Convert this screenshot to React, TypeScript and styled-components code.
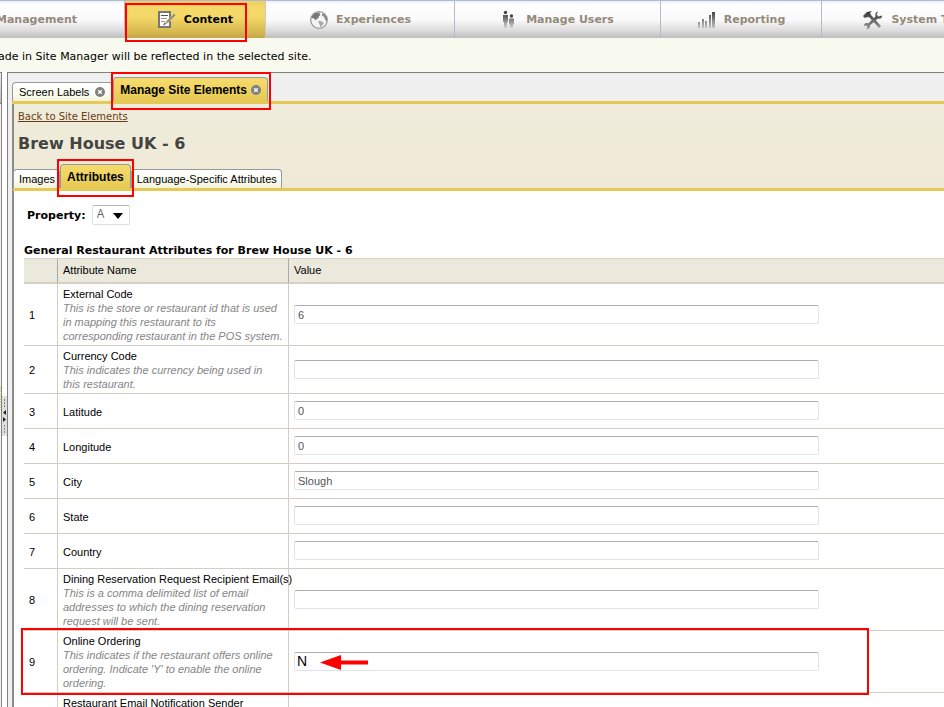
import React from "react";
import styled, { createGlobalStyle, css } from "styled-components";

const verdana = `"DejaVu Sans", Verdana, sans-serif`;
const arial = `"Liberation Sans", Arial, sans-serif`;

const GlobalStyle = createGlobalStyle`
  * { box-sizing: border-box; }
  html, body { margin: 0; padding: 0; }
  body { overflow: hidden; background: #fff; color: #000; font: 11px/14px ${arial}; }
  button, input, select { font: inherit; margin: 0; }
`;

const Page = styled.div`
  display: flex;
  flex-direction: column;
  height: 100vh;
  overflow: hidden;
`;

const Highlight = styled.span<{ $inset: string }>`
  position: absolute;
  inset: ${(p) => p.$inset};
  border: 2px solid #f00;
  pointer-events: none;
  z-index: 5;
`;

const Nav = styled.nav`
  display: flex;
  flex: none;
  height: 38px;
  border-top: 1px solid #a9bcd6;
  background: linear-gradient(#f0f0f4 0, #fff 4px, #fafafa 50%, #dcdcdc 80%, #bebebe 100%);
`;

const NavItem = styled.button<{ $width: number; $active?: boolean; $pull?: number }>`
  position: relative;
  display: flex;
  flex: none;
  align-items: center;
  justify-content: center;
  gap: 7px;
  width: ${(p) => p.$width}px;
  margin-left: ${(p) => p.$pull ?? 0}px;
  padding: 1px 0 0;
  border: 0;
  border-right: 1px solid #b9b7ce;
  background: none;
  color: #94897a;
  font: bold 11px/14px ${verdana};
  white-space: nowrap;
  ${(p) =>
    p.$active &&
    css`
      border-right-color: #c9c9cf;
      background: linear-gradient(#efcf62 0, #f5da69 8px, #f3d767 45%, #d9bb52 80%, #c4a548 100%);
      color: #000;
    `}
`;

const Notice = styled.div`
  display: flex;
  flex: none;
  align-items: center;
  height: 34px;
  padding-top: 4px;
  overflow: hidden;
  background: #f8f9ef;
  font: 11px/14px ${verdana};
  white-space: nowrap;
`;

const NoticeText = styled.p`
  margin: 0 0 0 -2px;
`;

const Workspace = styled.div`
  display: flex;
  flex: 1;
  min-height: 0;
`;

const SidePanel = styled.div`
  display: flex;
  flex: none;
  flex-direction: column;
  gap: 283px;
  width: 2px;
  border-top: 1px solid #808080;
  border-right: 1px solid #808080;
  background: #f4f4f4;
`;

const SideHeader = styled.div`
  height: 31px;
  border-bottom: 1px solid #808080;
  background: linear-gradient(#eee, #bbb);
`;

const SideTexture = styled.div`
  height: 24px;
  background: repeating-linear-gradient(#d8c868 0 1px, #fff 1px 2px);
`;

const Splitter = styled.div`
  display: flex;
  flex: none;
  align-items: center;
  width: 5px;
  padding-top: 53px;
`;

const Main = styled.main`
  display: flex;
  flex: 1;
  flex-direction: column;
  min-width: 0;
  padding-left: 4px;
  border-top: 1px solid #808080;
  border-left: 1px solid #808080;
  background: #f0f0f0;
`;

const TabStrip = styled.div`
  display: flex;
  flex: none;
  align-items: flex-end;
  height: 31px;
  border-bottom: 3px solid #e6c954;
`;

const Tab = styled.button<{ $active?: boolean; $compact?: boolean }>`
  position: relative;
  display: flex;
  align-items: center;
  gap: 6px;
  height: 19px;
  padding: ${(p) => (p.$compact ? "0 4px 0 5px" : "0 7px 0 6px")};
  border: 1px solid #999;
  border-bottom: 0;
  border-radius: 4px 4px 0 0;
  background: linear-gradient(#fff, #fdfdf5 50%, #f3f3dc);
  color: #000;
  font: 11px/14px ${arial};
  white-space: nowrap;
  ${(p) =>
    p.$active &&
    css`
      gap: 4px;
      height: 24px;
      padding: 0 6px;
      background: linear-gradient(#f6dc6d, #e6c954);
      font-size: 12px;
      font-weight: bold;
    `}
`;

const Body = styled.div`
  display: flex;
  flex: 1;
  flex-direction: column;
  min-height: 0;
  border-left: 2px solid #8b8b8b;
  background: #fff;
`;

const Heading = styled.header`
  flex: none;
  background: linear-gradient(#f0ecdb, #eeead6);
`;

const BackLink = styled.a`
  display: block;
  width: max-content;
  margin-left: 4px;
  padding-top: 6px;
  color: #683c14;
  font: 10px/14px ${verdana};
  text-decoration: underline;
`;

const Title = styled.h1`
  margin: 10px 0 0 4px;
  color: #444;
  font: bold 16px/20px ${verdana};
`;

const SubTabs = styled(TabStrip)`
  height: 37px;
  margin-left: -1px;
`;

const Pane = styled.section`
  flex: 1;
  min-height: 0;
  padding: 14px 0 0 10px;
  overflow: hidden;
`;

const Property = styled.div`
  display: flex;
  align-items: flex-end;
  gap: 6px;
  padding-left: 3px;
  font: bold 11px/14px ${verdana};
`;

const PropertyLabel = styled.label`
  padding-bottom: 2px;
`;

const SelectBox = styled.span`
  display: flex;
  position: relative;
`;

const Select = styled.select`
  width: 38px;
  height: 20px;
  padding: 0 4px 2px;
  border: 1px solid #dcdfe6;
  border-top-color: #b4b4ba;
  border-radius: 2px;
  background: #fff;
  color: #666;
  font: 12px/14px "Open Sans", ${arial};
  appearance: none;
`;

const SelectArrow = styled.svg`
  position: absolute;
  right: 7px;
  top: 8px;
  pointer-events: none;
`;

const Table = styled.table`
  width: 100%;
  margin-top: 19px;
  border-collapse: separate;
  border-spacing: 0;
  table-layout: fixed;
`;

const Caption = styled.caption`
  font: bold 11px/14px ${verdana};
  text-align: left;
`;

const Col = styled.col<{ $w?: number }>`
  width: ${(p) => (p.$w ? `${p.$w}px` : "auto")};
`;

const Th = styled.th`
  height: 26px;
  padding: 0 5px 2px;
  border-top: 1px solid #d5d2c6;
  border-right: 1px solid #aaa9ae;
  border-bottom: 2px solid #d5d0c3;
  background: #ebe9db;
  font: 11px/14px ${arial};
  text-align: left;
  &:last-child {
    border-right: 0;
  }
`;

const Td = styled.td`
  height: 35px;
  padding: 3px 4px 2px 5px;
  border-right: 1px solid #d3cec1;
  border-bottom: 1px solid #d3cec1;
  &:last-child {
    padding: 2px 4px 3px 5px;
    border-right: 0;
  }
`;

const Row = styled.tr`
  position: relative;
`;

const Name = styled.label`
  display: block;
  white-space: nowrap;
`;

const Hint = styled.em`
  display: block;
  color: #858585;
`;

const ValueCell = styled.div`
  position: relative;
`;

const ValueInput = styled.input<{ $marked?: boolean }>`
  display: block;
  width: 525px;
  height: 19px;
  padding: 1px 3px 0;
  border: 1px solid #dfe3ea;
  border-top-color: #abadb3;
  border-radius: 2px;
  background: #fff;
  color: #555;
  font: 11px/14px ${arial};
  ${(p) =>
    p.$marked &&
    css`
      padding: 0 2px;
      color: #000;
      font: 14px/16px ${arial};
    `}
`;

const Arrow = styled.svg`
  position: absolute;
  left: 26px;
  top: 3px;
`;

const NoteIcon = () => (
  <svg width="20" height="20" viewBox="0 0 20 20" aria-hidden="true">
    <path d="M2 2h11v15H2z" fill="#fff" stroke="#777" strokeWidth="2" />
    <path d="M4 5.500h7" stroke="#555" />
    <path d="M4 8.500h6M4 11.500h4" stroke="#999" />
    <path d="M7.500 14.500l2-3.500L17 3.500l2 1.500-7.500 7.500z" fill="#888" stroke="#f5da69" strokeWidth=".7" />
    <path d="M6 15.500l3-1.500-1.500-1.500z" fill="#555" />
  </svg>
);

const GlobeIcon = () => (
  <svg width="20" height="20" viewBox="0 0 20 20" aria-hidden="true">
    <circle cx="10" cy="10" r="8.300" fill="#f6f6f6" stroke="#999" strokeWidth="1.300" />
    <path d="M3 6l3-3 5-.5-.5 1.500 1 1-2 1.500.5 1.500-2 .5-1 2-2-2-2.500-.5z" fill="#777" />
    <path d="M9 11l3 0 3 2-1.500 2-2 2.500-1-3z" fill="#aaa" />
    <path d="M13 4l2-.5 3 4v4l-2-2-1-3-2-.5z" fill="#888" />
  </svg>
);

const PeopleIcon = () => (
  <svg width="18" height="20" viewBox="0 0 18 20" aria-hidden="true">
    <defs>
      <linearGradient id="people" gradientUnits="userSpaceOnUse" x1="0" y1="5" x2="0" y2="19">
        <stop offset="0" stopColor="#555" />
        <stop offset="1" stopColor="#ddd" />
      </linearGradient>
    </defs>
    <circle cx="4.500" cy="2.500" r="1.700" fill="#444" />
    <circle cx="10.500" cy="6" r="1.700" fill="#444" />
    <path d="M2 5h5v7H6v6H3v-6H2zM8 8.500h5v6h-1v3.500H9v-3.500H8z" fill="url(#people)" />
  </svg>
);

const BarsIcon = () => (
  <svg width="20" height="20" viewBox="0 0 20 20" aria-hidden="true">
    <defs>
      <linearGradient id="bars" gradientUnits="userSpaceOnUse" x1="0" y1="2" x2="0" y2="19">
        <stop offset="0" stopColor="#444" />
        <stop offset="1" stopColor="#ccc" />
      </linearGradient>
    </defs>
    <path d="M1 12h2v6H1zM5 9h2v9H5zM8 11h2v7H8zM12 5h2v13h-2zM15 2h3v16h-3z" fill="url(#bars)" />
  </svg>
);

const ToolsIcon = () => (
  <svg width="22" height="20" viewBox="0 0 22 20" aria-hidden="true">
    <defs>
      <linearGradient id="tools" gradientUnits="userSpaceOnUse" x1="0" y1="1" x2="0" y2="19">
        <stop offset="0" stopColor="#333" />
        <stop offset="1" stopColor="#999" />
      </linearGradient>
    </defs>
    <path
      d="M1 6l4-4 5-1-2 2 1 2 10 11-2 2L7 7 4 7.500 2.500 8zM16 1.500l-1.500 3 2 2 3.500-1c.5 2.500-2 4-4 3L8 15.500c.5 2-1 4-4 3.500l1.500-2-1-1.500L2 16c0-2.500 2-3.500 4-2.500l7.500-7C13 3.500 14 2 16 1.500z"
      fill="url(#tools)"
    />
  </svg>
);

const CloseIcon = () => (
  <svg width="10" height="10" viewBox="0 0 10 10" aria-hidden="true">
    <circle cx="5" cy="5" r="5" fill="#808080" />
    <path d="M3.200 3.200l3.600 3.600M6.800 3.200L3.200 6.800" stroke="#fff" strokeWidth="1.300" />
  </svg>
);

const GripIcon = () => (
  <svg width="5" height="40" viewBox="0 0 5 40" aria-hidden="true">
    <rect width="5" height="40" fill="#dfdfdf" />
    <path d="M2.500 3v9M2.500 29v9" stroke="#888" strokeDasharray="2 1" />
    <path d="M4 14v5L1 16.500zM1 21v5l3-2.500z" fill="#222" />
  </svg>
);

type Attribute = { name: string; hint?: string; value?: string; marked?: boolean };

const attributes: Attribute[] = [
  {
    name: "External Code",
    hint: "This is the store or restaurant id that is used in mapping this restaurant to its corresponding restaurant in the POS system.",
    value: "6",
  },
  { name: "Currency Code", hint: "This indicates the currency being used in this\u00a0restaurant." },
  { name: "Latitude", value: "0" },
  { name: "Longitude", value: "0" },
  { name: "City", value: "Slough" },
  { name: "State" },
  { name: "Country" },
  {
    name: "Dining Reservation Request Recipient Email(s)",
    hint: "This is a comma delimited list of email addresses to which the dining reservation request will be sent.",
  },
  {
    name: "Online Ordering",
    hint: "This indicates if the restaurant offers online ordering. Indicate 'Y' to enable the online ordering.",
    value: "N",
    marked: true,
  },
  { name: "Restaurant Email Notification Sender" },
];

const AttributeRow = ({ item, index }: { item: Attribute; index: number }) => {
  const last = index === attributes.length;
  return (
    <Row>
      <Td>{!last && index}</Td>
      <Td>
        <Name htmlFor={last ? undefined : `attribute-${index}`}>{item.name}</Name>
        {item.hint && <Hint>{item.hint}</Hint>}
      </Td>
      <Td>
        {!last && (
          <ValueCell>
            <ValueInput id={`attribute-${index}`} defaultValue={item.value} $marked={item.marked} />
            {item.marked && (
              <Arrow width="49" height="15" viewBox="0 0 49 15" aria-hidden="true">
                <path d="M0 7.500L21 0v5.500h27v4H21V15z" fill="#f00" />
              </Arrow>
            )}
          </ValueCell>
        )}
        {item.marked && <Highlight $inset="-3px 75px -2px -3px" />}
      </Td>
    </Row>
  );
};

const LastRows = styled.tbody`
  ${Td} {
    height: 48px;
    vertical-align: top;
  }
`;

export default function App() {
  const rows = attributes.map((item, i) => <AttributeRow key={item.name} item={item} index={i + 1} />);
  return (
    <Page>
      <GlobalStyle />
      <Nav>
        <NavItem $width={176} $pull={-51}>Management</NavItem>
        <NavItem $width={141} $active>
          <NoteIcon />
          Content
          <Highlight $inset="2px 18px -4px 0" />
        </NavItem>
        <NavItem $width={189}>
          <GlobeIcon />
          Experiences
        </NavItem>
        <NavItem $width={206}>
          <PeopleIcon />
          Manage Users
        </NavItem>
        <NavItem $width={161}>
          <BarsIcon />
          Reporting
        </NavItem>
        <NavItem $width={192}>
          <ToolsIcon />
          System Tools
        </NavItem>
      </Nav>
      <Notice>
        <NoticeText>ade in Site Manager will be reflected in the selected site.</NoticeText>
      </Notice>
      <Workspace>
        <SidePanel>
          <SideHeader />
          <SideTexture />
        </SidePanel>
        <Splitter>
          <GripIcon />
        </Splitter>
        <Main>
          <TabStrip>
            <Tab>
              Screen Labels
              <CloseIcon />
            </Tab>
            <Tab $active>
              Manage Site Elements
              <CloseIcon />
              <Highlight $inset="-6px -4px -9px -3px" />
            </Tab>
          </TabStrip>
          <Body>
            <Heading>
              <BackLink href="#elements">Back to Site Elements</BackLink>
              <Title>Brew House UK - 6</Title>
              <SubTabs>
                <Tab $compact>Images</Tab>
                <Tab $active>
                  Attributes
                  <Highlight $inset="-6px -4px -9px -4px" />
                </Tab>
                <Tab $compact>Language-Specific Attributes</Tab>
              </SubTabs>
            </Heading>
            <Pane>
              <Property>
                <PropertyLabel htmlFor="property">Property:</PropertyLabel>
                <SelectBox>
                  <Select id="property" defaultValue="A">
                    <option>A</option>
                  </Select>
                  <SelectArrow width="10" height="6" viewBox="0 0 10 6" aria-hidden="true">
                    <path d="M0 0h10L5 6z" />
                  </SelectArrow>
                </SelectBox>
              </Property>
              <Table>
                <Caption>General Restaurant Attributes for Brew House UK - 6</Caption>
                <colgroup>
                  <Col $w={34} />
                  <Col $w={231} />
                  <Col />
                </colgroup>
                <thead>
                  <tr>
                    <Th aria-label="Number" />
                    <Th>Attribute Name</Th>
                    <Th>Value</Th>
                  </tr>
                </thead>
                <tbody>{rows.slice(0, -1)}</tbody>
                <LastRows>{rows.slice(-1)}</LastRows>
              </Table>
            </Pane>
          </Body>
        </Main>
      </Workspace>
    </Page>
  );
}
